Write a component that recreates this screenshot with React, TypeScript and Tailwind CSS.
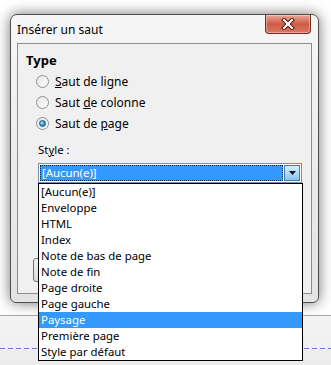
import { useState } from "react";

const styles = [
  "[Aucun(e)]",
  "Enveloppe",
  "HTML",
  "Index",
  "Note de bas de page",
  "Note de fin",
  "Page droite",
  "Page gauche",
  "Paysage",
  "Première page",
  "Style par défaut",
];

function Radio({ checked }: { checked?: boolean }) {
  return (
    <span className="flex h-[13px] w-[13px] items-center justify-center rounded-full border border-[#8e8f8f] bg-gradient-to-br from-[#e6e6e6] to-[#fbfbfb]">
      {checked && (
        <span className="h-[7px] w-[7px] rounded-full border border-[#1c5180] bg-[radial-gradient(circle_at_35%_35%,#bfe6ff_0,#3aa0dc_45%,#145a8c_100%)]" />
      )}
    </span>
  );
}

function RadioRow({ checked, children }: { checked?: boolean; children: React.ReactNode }) {
  return (
    <div className="flex h-[21px] items-center gap-[6px] pl-[10px]">
      <Radio checked={checked} />
      <span className="leading-none">{children}</span>
    </div>
  );
}

export default function App() {
  const [hover] = useState(8);

  return (
    <div className="relative h-[365px] w-[331px] overflow-hidden bg-white font-['Noto_Sans',sans-serif] text-[11.4px] text-black">
      {/* Dialog window */}
      <div className="relative ml-[10px] mt-[14px] flex h-[289px] w-[309px] flex-col rounded-t-[7px] rounded-b-[6px] border border-[#4e4e4e] bg-gradient-to-b from-[#f6f6f6] via-[#ececec] to-[#e3e3e3] px-[6px] pb-[8px] shadow-[0_0_14px_rgba(0,0,0,0.55)]">
        <div className="flex h-[28px] items-start justify-between">
          <span className="pt-[8px] text-[12px] leading-[14px]">Insérer un saut</span>
          <div className="mr-[1px] flex h-[19px] w-[46px] items-center justify-center rounded-b-[4px] border border-t-0 border-[#7a2a1e] bg-gradient-to-b from-[#e9a899] via-[#cf5a45] to-[#d97a62] shadow-[inset_0_0_0_1px_rgba(255,255,255,0.35)]">
            <svg width="14" height="12" viewBox="0 0 14 12">
              <path d="M3 2 L11 10 M11 2 L3 10" stroke="#5a1a12" strokeWidth="4" strokeLinecap="square" />
              <path d="M3 2 L11 10 M11 2 L3 10" stroke="#ffffff" strokeWidth="2" strokeLinecap="square" />
            </svg>
          </div>
        </div>

        <div className="flex flex-1 flex-col border border-[#8d8d8d] bg-[#f0f0f0] pb-[11px] pl-[8px] pt-[8px]">
          <div className="text-[13px] font-bold leading-[16px]">Type</div>
          <div className="mt-[3px] flex flex-col text-[12px]">
            <RadioRow>
              <span className="underline">S</span>aut de ligne
            </RadioRow>
            <RadioRow>
              Saut <span className="underline">d</span>e colonne
            </RadioRow>
            <RadioRow checked>
              Saut de <span className="underline">p</span>age
            </RadioRow>
          </div>

          <div className="ml-[12px] mt-[9px] leading-[14px]">
            St<span className="underline">y</span>le :
          </div>

          <div className="relative ml-[12px] mt-[6px] h-[20px] w-[264px]">
            <div className="flex h-full items-center border border-[#7c8fa3] bg-white p-[1px]">
              <div className="flex h-full flex-1 items-center bg-[#3399ff] pl-[2px] text-white outline outline-1 outline-dotted outline-offset-[-1px] outline-[#0b2a55]">
                {styles[0]}
              </div>
              <div className="ml-[1px] flex h-full w-[16px] items-center justify-center border border-[#3c7fb1] bg-gradient-to-b from-[#d8eefc] to-[#86c3ea]">
                <svg width="7" height="4" viewBox="0 0 7 4">
                  <path d="M0 0 H7 L3.5 4 Z" fill="#0f1b2a" />
                </svg>
              </div>
            </div>

            {/* Open list */}
            <ul className="absolute left-0 top-full z-10 w-[265px] border border-black bg-white">
              {styles.map((s, i) => (
                <li
                  key={s}
                  className={
                    i === hover
                      ? "h-[16px] bg-[#3399ff] pl-[2px] leading-[16px] text-white"
                      : "h-[16px] pl-[2px] leading-[16px]"
                  }
                >
                  {s}
                </li>
              ))}
            </ul>
          </div>

          <div className="mt-auto flex pl-[7px]">
            <button
              aria-label="Aide"
              className="h-[24px] w-[75px] rounded-[3px] border border-[#707070] bg-gradient-to-b from-[#f2f2f2] to-[#dcdcdc]"
            />
          </div>
        </div>
      </div>

      {/* Document area behind the dialog */}
      <div className="mt-[12px] h-[50px] border-t border-[#a7a7a7] bg-gradient-to-b from-[#f4f4f4] to-[#ececec] pt-[32px]">
        <div className="h-px bg-[repeating-linear-gradient(90deg,#7272d2_0_5px,transparent_5px_8px)]" />
      </div>
    </div>
  );
}
